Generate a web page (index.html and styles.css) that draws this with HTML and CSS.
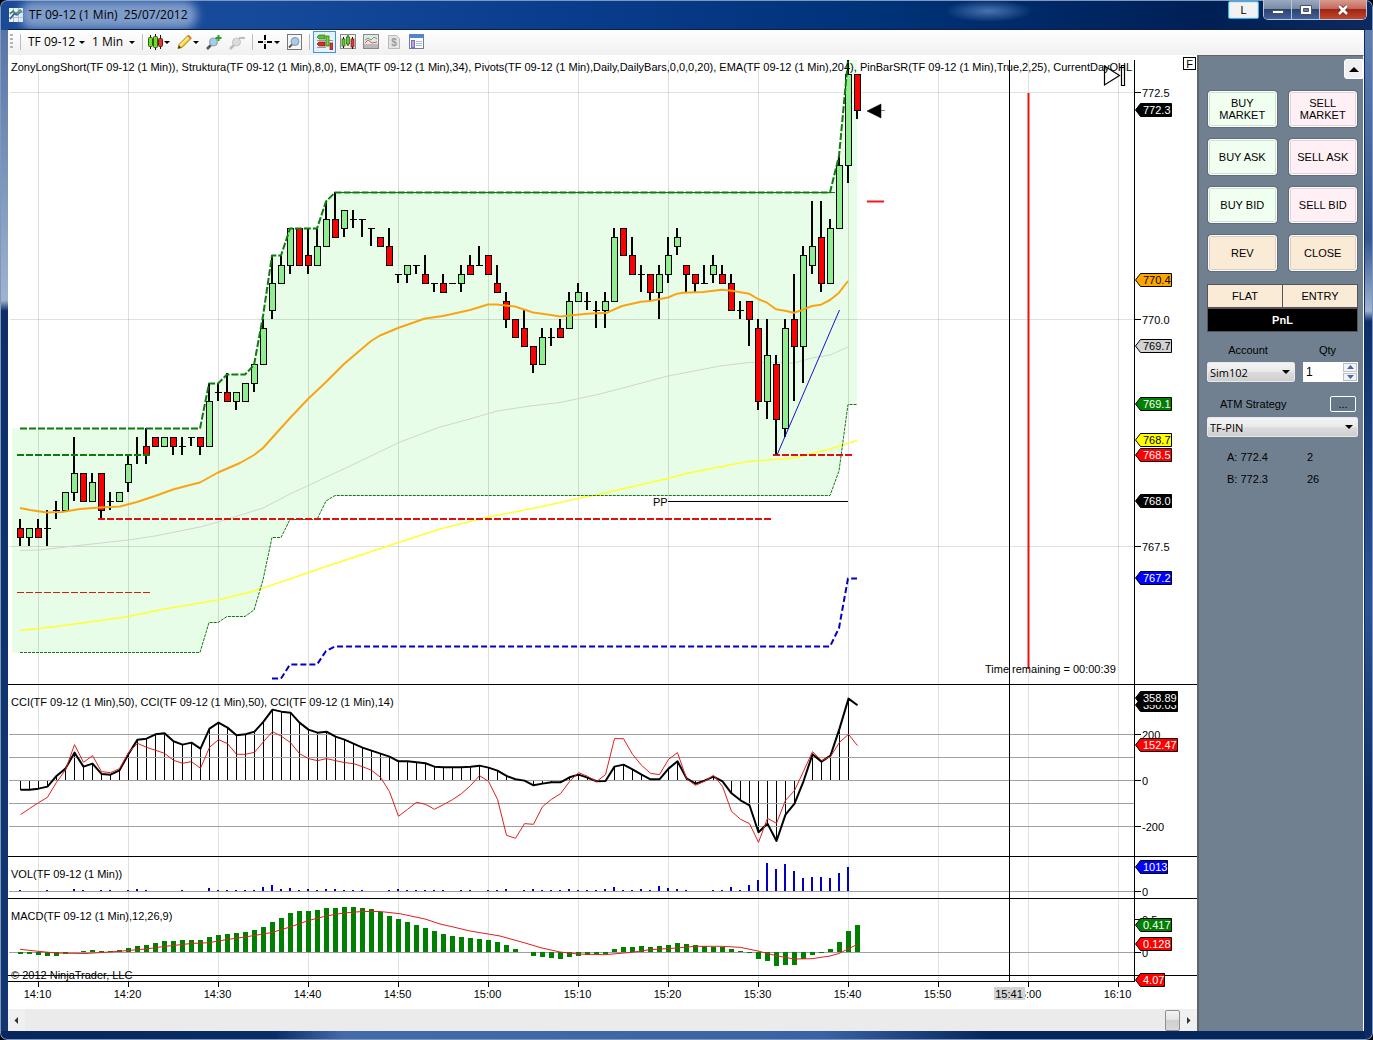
FILE: index.html
```html
<!DOCTYPE html>
<html lang="en">
<head>
<meta charset="utf-8">
<title>TF 09-12 (1 Min)</title>
<link rel="stylesheet" href="styles.css">
</head>
<body>
<div class="window">
  <header class="titlebar">
    <svg class="app-icon" width="14" height="14" viewBox="0 0 14 14"><rect width="14" height="14" fill="#eef3f6"/><path d="M4.500 0v14M9.500 0v14M0 4.500h14M0 9.500h14" stroke="#a9bccb"/><path d="M1 6l3-3 3 3 4-4 2 2" fill="none" stroke="#2f8a3a" stroke-width="1.500"/><path d="M1 11l4-5 3 1 5-4" fill="none" stroke="#2b56a8" stroke-width="1.500"/></svg>
    <h1 class="title">TF 09-12 (1 Min)&nbsp; 25/07/2012</h1>
    <button class="l-button" type="button">L</button>
    <div class="caption-buttons">
      <button class="cap" type="button" aria-label="Minimize"><svg width="14" height="12" viewBox="0 0 14 12"><rect x="1.500" y="6.500" width="11" height="3" fill="#fff" stroke="#4a5266"/></svg></button>
      <button class="cap" type="button" aria-label="Maximize"><svg width="14" height="12" viewBox="0 0 14 12"><path d="M1.500 1.500h11v9h-11z" fill="#fff" stroke="#4a5266"/><path d="M4.500 4.500h5v3h-5z" fill="#6b7fa5" stroke="#4a5266"/></svg></button>
      <button class="cap cap-close" type="button" aria-label="Close"><svg width="14" height="12" viewBox="0 0 14 12"><path d="M3 2l8 8M11 2l-8 8" stroke="#6b3030" stroke-width="4"/><path d="M3 2l8 8M11 2l-8 8" stroke="#fff" stroke-width="2.500"/></svg></button>
    </div>
  </header>

  <div class="client">
    <nav class="toolbar" aria-label="Chart toolbar">
      <span class="grip"></span>
      <span class="sep"></span>
      <button class="tool tool-instrument" type="button">TF 09-12<i class="caret"></i></button>
      <button class="tool tool-interval" type="button">1 Min<i class="caret"></i></button>
      <span class="sep"></span>
      <button class="tool tool-drop" type="button" aria-label="Chart style">
        <svg width="15" height="16" viewBox="0 0 15 16"><path d="M2.500 1v14M7.500 0v16M12.500 1v14" stroke="#111"/><rect x=".5" y="3.500" width="4" height="9" rx="1" fill="#6fdc2c" stroke="#2c5c12"/><rect x="5.500" y="2.500" width="4" height="11" rx="1" fill="#6fdc2c" stroke="#2c5c12"/><rect x="10.500" y="4.500" width="4" height="8" rx="1" fill="#e2382e" stroke="#6e1c16"/></svg><i class="caret"></i></button>
      <button class="tool tool-drop" type="button" aria-label="Draw">
        <svg width="15" height="16" viewBox="0 0 15 16"><path d="M1 14.500l1-4 9-9 3 3-9 9z" fill="#fbd12b" stroke="#a67c10"/><path d="M3 11.500l9-9" stroke="#fff3a8" stroke-width="1.500"/><path d="M1 14.500l1-3 2 2z" fill="#333"/><path d="M11 1.500l3 3" stroke="#d9773b" stroke-width="2"/></svg><i class="caret"></i></button>
      <button class="tool" type="button" aria-label="Zoom in">
        <svg width="16" height="16" viewBox="0 0 16 16"><path d="M1 15l4-4" stroke="#555" stroke-width="2.500"/><circle cx="7.500" cy="8" r="4" fill="#a7cbe8" stroke="#8b9bab"/><path d="M12.500 1v6M9.500 4h6" stroke="#2c9d2c" stroke-width="2"/></svg></button>
      <button class="tool" type="button" aria-label="Zoom out">
        <svg width="16" height="16" viewBox="0 0 16 16"><path d="M1 15l4-4" stroke="#bbb" stroke-width="2.500"/><circle cx="7.500" cy="8" r="4" fill="#dcdcdc" stroke="#c4c4c4"/><path d="M10 4h6" stroke="#bdbdbd" stroke-width="2"/></svg></button>
      <span class="sep"></span>
      <button class="tool tool-drop" type="button" aria-label="Crosshair">
        <svg width="15" height="16" viewBox="0 0 15 16"><path d="M7 1v5M7 10v5M0 8h5M9 8h5" stroke="#000" stroke-width="2"/><path d="M6.500 8h1" stroke="#000"/></svg><i class="caret"></i></button>
      <button class="tool" type="button" aria-label="Zoom frame">
        <svg width="15" height="16" viewBox="0 0 15 16"><rect x=".5" y=".5" width="14" height="15" fill="#f7f7f7" stroke="#777"/><path d="M2 13.500l3-3" stroke="#555" stroke-width="2"/><circle cx="8" cy="7.500" r="4" fill="#a7cbe8" stroke="#7d95ab"/></svg></button>
      <span class="sep"></span>
      <div class="tool-group">
        <button class="tool tool-sq tool-on" type="button" aria-label="Chart trader">
          <svg width="16" height="16" viewBox="0 0 16 16"><path d="M0 6.500h16M0 13.500h9" stroke="#999"/><path d="M2 1h6v4H2L0 3z" fill="#57c22c" stroke="#2c7a14" stroke-width=".7"/><path d="M2 8h6v4H2L0 10z" fill="#d92d22" stroke="#7a1410" stroke-width=".7"/><rect x="9" y="2" width="3" height="10" fill="#6fdc2c" stroke="#2c5c12" stroke-width=".7"/><rect x="13" y="9" width="3" height="7" fill="#e2382e" stroke="#6e1c16" stroke-width=".7"/></svg></button>
        <button class="tool tool-sq" type="button" aria-label="Data series">
          <svg width="16" height="16" viewBox="0 0 16 16"><rect x=".5" y=".5" width="15" height="14" fill="#f0f0f0" stroke="#888"/><path d="M3.500 3v11M8 1v11M12.500 3v12" stroke="#111"/><rect x="2" y="5" width="3" height="7" fill="#5ccc24" stroke="#2c5c12" stroke-width=".7"/><rect x="6.500" y="3" width="3" height="7" fill="#5ccc24" stroke="#2c5c12" stroke-width=".7"/><rect x="11" y="5" width="3" height="8" fill="#e2382e" stroke="#6e1c16" stroke-width=".7"/></svg></button>
        <button class="tool tool-sq" type="button" aria-label="Indicators">
          <svg width="16" height="16" viewBox="0 0 16 16"><rect x=".5" y=".5" width="15" height="14" fill="#e6e6e6" stroke="#888"/><rect x="1" y="10" width="14" height="4" fill="#b9b9b9"/><path d="M2 6l3-2 3 2 3-3 3 2" fill="none" stroke="#53b06a"/><path d="M2 9l3-3 4 3 5-1" fill="none" stroke="#d4605c"/></svg></button>
        <button class="tool tool-sq" type="button" aria-label="Strategies">
          <svg width="12" height="16" viewBox="0 0 12 16"><path d="M.5 1.500h8l3 3v10H.5z" fill="#e4e4e4" stroke="#b9b9b9"/><text class="dollar" x="6" y="12" text-anchor="middle">$</text></svg></button>
        <button class="tool tool-sq" type="button" aria-label="Properties">
          <svg width="15" height="16" viewBox="0 0 15 16"><rect x=".5" y=".5" width="14" height="14" fill="#fff" stroke="#6f7f98"/><rect x="1" y="1" width="13" height="3" fill="#4d86dd"/><rect x="2.500" y="6.500" width="3" height="7" fill="#b9a6f2" stroke="#7d68cc"/><path d="M7 7.500h6M7 9.500h6M7 11.500h6" stroke="#a9b8cc"/></svg></button>
      </div>
    </nav>

    <div class="workspace">
      <main class="chart">
        <div class="chart-body">
          <svg class="plot" id="plot" role="img" aria-label="Price chart"></svg>
          <svg class="axis" id="axis" role="img" aria-label="Price axis"></svg>
          <button class="f-button" type="button">F</button>
        </div>
        <div class="scrollbar">
          <button class="scroll-arrow" type="button" aria-label="Scroll left"><svg width="5" height="7" viewBox="0 0 5 7"><path d="M4 0v7L.5 3.500z" fill="#333"/></svg></button>
          <span class="scroll-thumb"></span>
          <button class="scroll-arrow" type="button" aria-label="Scroll right"><svg width="5" height="7" viewBox="0 0 5 7"><path d="M1 0v7l3.500-3.500z" fill="#333"/></svg></button>
        </div>
      </main>

      <aside class="trader">
        <button class="collapse" type="button" aria-label="Collapse"><svg width="10" height="5" viewBox="0 0 10 5"><path d="M0 5h10L5 0z" fill="#000"/></svg></button>
        <div class="orders">
          <button class="order buy" type="button">BUY<br>MARKET</button>
          <button class="order sell" type="button">SELL<br>MARKET</button>
          <button class="order buy" type="button">BUY ASK</button>
          <button class="order sell" type="button">SELL ASK</button>
          <button class="order buy" type="button">BUY BID</button>
          <button class="order sell" type="button">SELL BID</button>
          <button class="order manage" type="button">REV</button>
          <button class="order manage" type="button">CLOSE</button>
        </div>
        <div class="position">
          <span class="cell">FLAT</span><span class="cell">ENTRY</span>
          <span class="pnl">PnL</span>
        </div>
        <div class="account">
          <label for="account">Account</label>
          <label for="qty">Qty</label>
          <span class="select"><select id="account"><option>Sim102</option></select><i class="caret"></i></span>
          <span class="spinner">
            <input id="qty" type="text" value="1">
            <span class="spin-buttons">
              <button type="button" aria-label="Increase"><svg width="7" height="4" viewBox="0 0 7 4"><path d="M0 4h7L3.500 0z" fill="#4a66a8"/></svg></button>
              <button type="button" aria-label="Decrease"><svg width="7" height="4" viewBox="0 0 7 4"><path d="M0 0h7L3.500 4z" fill="#4a66a8"/></svg></button>
            </span>
          </span>
        </div>
        <div class="atm">
          <label for="atm">ATM Strategy</label>
          <button class="more" type="button">...</button>
        </div>
        <span class="select"><select id="atm"><option>TF-PIN</option></select><i class="caret"></i></span>
        <dl class="quotes">
          <dt>A: 772.4</dt><dd>2</dd>
          <dt>B: 772.3</dt><dd>26</dd>
        </dl>
      </aside>
    </div>
  </div>
</div>
<script src="chart.js"></script>
</body>
</html>
```
FILE: styles.css
```css
* { box-sizing: border-box; }

body {
  margin: 0;
  background: #000;
  font-family: "Liberation Sans", Arial, sans-serif;
  font-size: 11px;
  line-height: 12px;
  color: #000;
}

button, input, select {
  margin: 0;
  padding: 0;
  border: 0;
  font: inherit;
  color: inherit;
  background: none;
}

button {
  display: flex;
  align-items: center;
  justify-content: center;
}

.window {
  min-height: 100vh;
  display: flex;
  flex-direction: column;
  padding: 0 9px 9px 8px;
  border-radius: 7px;
  background:
    linear-gradient(#5f7fae, #33578f 20%, #9fb3d0 27%, #0c2f68 28%, #2c5494 55%, #0a2c62 75%) right 0 top 30px / 8px 100% no-repeat,
    linear-gradient(90deg, #06265b, #0a2d66 20%, #456aa8 25%, #3b62a2 60%, #05265a 72%) 0 100% / 100% 9px no-repeat,
    linear-gradient(#5575a6, #7f97bd 15%, #9fb3d0 26%, #0c2f68 27%, #123873) 0 30px / 8px 100% no-repeat,
    radial-gradient(ellipse 44px 11px at 72% 11px, rgba(120, 165, 220, .6), transparent) 0 0 / 100% 30px no-repeat,
    linear-gradient(90deg, #1b4a97, #164a9b 18%, #0a3d8e 40%, #003277 65%, #001f55 88%, #0c2a60) 0 0 / 100% 30px no-repeat,
    #0a2d66;
  box-shadow: inset 0 0 0 1px #7f97bd;
}

/* Title bar */
.titlebar {
  height: 29px;
  display: flex;
  align-items: flex-start;
}

.app-icon { margin: 8px 6px 0 1px; }

.title {
  margin: 10px auto 0 0;
  border-radius: 6px;
  background: rgba(195, 212, 236, .6);
  box-shadow: 0 0 10px 9px rgba(195, 212, 236, .6);
  font: 12px/10px "Open Sans", "Noto Sans", sans-serif;
}

.l-button {
  width: 31px;
  height: 18px;
  margin: 1px 4px 0 0;
  border: 1px solid #3fb0de;
  border-radius: 2px;
  background: #f2f2f2;
  box-shadow: inset 0 0 0 1px #c9ecf8;
}

.caption-buttons {
  display: flex;
  height: 20px;
  margin-right: -3px;
  border: 1px solid #b9c5da;
  border-top: 0;
  border-radius: 0 0 5px 5px;
  overflow: hidden;
}

.cap {
  width: 28px;
  border-right: 1px solid #b9c5da;
  background: linear-gradient(#9aa9c3, #76899f 48%, #2b4370 50%, #42629b);
}

.cap-close {
  width: 46px;
  border-right: 0;
  background: linear-gradient(#d99a8c, #c4685a 48%, #a02413 50%, #c2482e);
}

.client {
  flex: 1;
  display: flex;
  flex-direction: column;
  border-top: 1px solid #10203c;
  background: #fff;
}

/* Toolbar */
.toolbar {
  height: 25px;
  display: flex;
  align-items: center;
  gap: 7px;
  padding: 0 0 1px 2px;
  background: linear-gradient(#fff, #f0f0f0);
}

.grip { width: 3px; height: 16px; background: repeating-linear-gradient(#b5b5b5 0 2px, transparent 2px 4px); }
.sep { width: 1px; height: 16px; background: #bdbdbd; }

.tool {
  height: 22px;
  justify-content: space-between;
  font: 12px/16px "Open Sans", "Noto Sans", sans-serif;
  white-space: nowrap;
}

.tool-instrument { width: 57px; }
.tool-interval { width: 43px; }
.tool-drop { width: 22px; }
.sep + .tool-drop { margin-left: -2px; }
.tool-group { display: flex; margin-left: -4px; }
.tool-sq { width: 23px; justify-content: center; }
.tool-on { border: 1px solid #3c96e0; background: #e5f1fb; }
.dollar { font: bold 10px "Liberation Sans", sans-serif; fill: #999; }

.caret {
  flex: none;
  width: 0;
  height: 0;
  border: 3px solid transparent;
  border-top-color: #000;
  border-bottom: 0;
}

/* Chart */
.workspace { flex: 1; display: flex; }
.chart { flex: 1; min-width: 0; display: flex; flex-direction: column; }
.chart-body { flex: 1; display: flex; position: relative; }
.plot { flex: 1; min-width: 0; height: 954px; overflow: hidden; }
.axis { width: 63px; height: 954px; }
.plot text, .axis text { font: 11px "Liberation Sans", Arial, sans-serif; }

.f-button {
  position: absolute;
  right: 1px;
  top: 2px;
  width: 13px;
  height: 13px;
  border: 1px solid #000;
  background: #fff;
}

.scrollbar { height: 22px; display: flex; align-items: center; background: #ebebeb; }
.scroll-arrow { width: 17px; height: 22px; background: #f0f0f0; }
.scroll-thumb {
  width: 15px;
  height: 21px;
  margin-left: auto;
  border: 1px solid #8f8f8f;
  border-radius: 2px;
  background: linear-gradient(#f3f3f3, #e4e4e4 45%, #cfcfcf 50%, #d8d8d8);
}

/* Order entry panel */
.trader {
  width: 167px;
  padding: 4px 5px 0 8px;
  border: 1px solid #5f6468;
  border-width: 1px 0 0 2px;
  border-right: 1px solid #fff;
  background: #708090;
}

.collapse {
  width: 19px;
  height: 20px;
  margin: -1px -5px 12px auto;
  border: 1px solid #fff;
  border-radius: 3px 0 0 3px;
  background: #f0f0f0;
}

.orders {
  display: grid;
  grid-template-columns: 1fr 1fr;
  gap: 12px;
  padding: 0 1px;
}

.order {
  height: 36px;
  border: 1px solid #fff;
  border-radius: 3px;
  box-shadow: inset 0 0 0 1px rgba(0, 0, 0, .12), 0 0 0 1px #5f6d7b;
}

.buy { background: #f0fff0; }
.sell { background: #fff0f5; }
.manage { background: #faebd7; }

.position {
  display: grid;
  grid-template-columns: 1fr 1fr;
  gap: 1px;
  margin-top: 13px;
  border: 1px solid #555;
  background: #555;
  text-align: center;
  line-height: 22px;
}

.cell { background: #faebd7; }
.pnl { grid-column: 1 / -1; margin-top: 1px; background: #000; color: #fff; font-weight: bold; }

.account {
  display: grid;
  grid-template-columns: 88px 55px;
  justify-content: space-between;
  gap: 6px 0;
  margin-top: 12px;
}

.account label { text-align: center; padding-right: 6px; }

.select {
  display: flex;
  align-items: center;
  height: 20px;
  padding-right: 4px;
  border: 1px solid #e8e8e8;
  border-radius: 2px;
  background: linear-gradient(#f4f4f4, #e9e9e9 48%, #dcdcdc 52%, #cfcfcf);
}

.select select {
  flex: 1;
  appearance: none;
  padding-left: 2px;
  font: 11px/17px "Open Sans", "Noto Sans", sans-serif;
}

.select .caret { border-width: 4px 4px 0; }

.spinner { display: flex; height: 20px; padding: 1px; background: #fff; }
.spinner input { flex: 1; min-width: 0; padding-left: 2px; line-height: 16px; font-size: 12px; }
.spin-buttons { width: 14px; display: grid; grid-template-rows: 1fr 1fr; gap: 1px; }
.spin-buttons button { border: 1px solid #b9c0c9; background: #f2f2f2; }

.atm {
  display: flex;
  align-items: center;
  justify-content: space-between;
  margin: 14px 2px 5px 13px;
}

.more { width: 26px; height: 16px; border: 1px solid #fff; border-radius: 2px; background: #66778a; }

.quotes {
  display: grid;
  grid-template-columns: 80px 1fr;
  gap: 10px 0;
  margin: 14px 0 0 20px;
}

.quotes dd { margin: 0; }
```
FILE: chart.js
```js
const NS = "http://www.w3.org/2000/svg";
const TOP = 55, LEFT = 8, AXIS_LEFT = 1134;

// Bars are one minute apart, nine pixels each; the first bar is 14:08.
const barX = i => 20 + 9 * i;
// Candle prices are ticks of 0.1 from 770.0.
const tickY = t => 319.5 - 9.08 * t;

function add(parent, tag, attrs, text) {
  const node = document.createElementNS(NS, tag);
  for (const key in attrs) node.setAttribute(key, attrs[key]);
  if (text !== undefined) node.textContent = text;
  parent.appendChild(node);
  return node;
}
const rect = (g, x, y, w, h, fill, stroke) =>
  add(g, "rect", { x, y, width: w, height: h, fill, stroke: stroke || "none", "shape-rendering": "crispEdges" });
const seg = (g, x1, y1, x2, y2, stroke, width, dash) =>
  add(g, "line", { x1, y1, x2, y2, stroke, "stroke-width": width || 1, "stroke-dasharray": dash || "none" });
const poly = (g, points, stroke, width, dash) =>
  add(g, "polyline", { points: points.map(p => p.join()).join(" "), fill: "none", stroke, "stroke-width": width || 1, "stroke-dasharray": dash || "none", "stroke-linejoin": "round" });
const label = (g, x, y, text, fill, anchor) =>
  add(g, "text", { x, y: y + 4, fill: fill || "#000", "text-anchor": anchor || "start" }, text);

// open, high, low, close
const candles = [
  [-23,-22,-25,-24],[-24,-23,-25,-23],[-23,-22,-24,-24],[-23,-21,-25,-23],[-21,-20,-22,-21],[-21,-19,-21,-19],
  [-19,-13,-20,-17],[-17,-17,-20,-20],[-20,-17,-20,-18],[-17,-17,-22,-21],[-20,-19,-21,-20],[-20,-19,-20,-19],
  [-18,-15,-19,-16],[-15,-13,-16,-15],[-14,-12,-16,-15],[-13,-13,-14,-14],[-14,-13,-14,-13],[-13,-13,-15,-14],
  [-14,-13,-15,-14],[-13,-13,-14,-13],[-13,-13,-15,-14],[-14,-7,-14,-9],[-8,-7,-9,-8],[-8,-6,-9,-9],
  [-9,-8,-10,-8],[-9,-7,-9,-7],[-7,-5,-8,-5],[-5,0,-5,-1],[1,7,0,4],[4,7,4,6],[6,10,5,10],[10,10,6,6],
  [7,10,5,6],[6,10,6,8],[8,13,8,11],[11,14,9,9],[10,12,9,12],[11,12,10,11],[11,11,9,11],[10,10,8,10],
  [9,9,8,8],[8,10,6,6],[5,5,4,5],[5,6,4,6],[6,6,5,6],[5,7,4,4],[4,4,3,4],[4,5,3,3],[4,4,4,4],[4,6,3,5],
  [6,7,5,5],[6,8,6,6],[7,7,5,5],[4,6,3,3],[2,3,-1,0],[0,0,-2,-2],[-1,1,-3,-3],[-3,-3,-6,-5],[-5,-1,-5,-2],
  [-2,-1,-3,-2],[-1,0,-2,-2],[-1,3,-1,2],[2,4,2,3],[2,3,1,2],[1,2,-1,1],[1,3,-1,2],[2,10,2,9],[10,10,7,7],
  [7,9,5,5],[5,6,3,5],[5,5,2,3],[3,6,0,5],[5,9,4,7],[8,10,7,9],[6,6,3,5],[5,5,3,4],[4,6,4,4],[5,7,4,6],
  [5,6,4,4],[4,5,1,1],[1,2,0,1],[2,2,-3,0],[-1,0,-10,-9],[-9,0,-11,-4],[-5,-4,-15,-11],[-12,0,-13,-1],
  [0,5,-9,-3],[-3,8,-7,7],[6,13,5,8],[9,13,3,4],[4,11,4,10],[10,18,10,17],[17,28.5,15,27],[27,27,22,23]
];

const upper = [[20,428.5],[200,428.5],[209,383.5],[218,383.5],[227,374.5],[245,374.5],[254,365],[263,316],[272,255.5],[281,255.5],[290,228.5],[317,228.5],[326,201.5],[335,192.5],[830,192.5],[839,156],[848,60]];
const lower = [[20,652.5],[200,652.5],[209,622.5],[218,622.5],[227,616.5],[245,616.5],[254,610],[263,580],[272,537.5],[281,537.5],[290,519.5],[317,519.5],[326,501],[335,495.5],[830,495.5],[839,471],[848,404.5],[857,404.5]];
const ema34 = [[20,508],[30,510],[47,512.5],[62,512],[80,509],[100,507.5],[120,506.5],[137,502],[155,496],[173,489.5],[190,485],[200,482.5],[218,472.5],[240,463],[254,455],[263,448],[290,418],[308,399],[326,382],[344,364],[371,341],[380,335.5],[398,328],[425,318.5],[443,316],[461,312],[470,310],[488,304.5],[497,304.5],[515,306.5],[533,312.5],[551,315],[560,316.5],[587,313.7],[607,312.7],[622,306],[641,301.7],[650,301],[668,297.5],[677,293.7],[683,292.7],[703,292],[722,289.7],[732,290.7],[749,293.7],[758,299],[767,302.7],[776,309.3],[785,310.7],[794,312.7],[803,309.7],[812,306],[821,304.7],[830,300],[839,292.7],[848,281]];
const emaSlow = [[20,550.5],[40,550],[74,546],[128,540],[155,536],[200,527],[218,522],[263,508],[290,494],[320,480],[350,466],[400,442],[440,427],[468,419.5],[497,411],[530,406],[560,402.5],[600,394],[668,376],[720,366],[749,362.5],[794,363],[812,358],[830,355],[848,347]];
const ema204 = [[20,630.5],[60,626],[128,616.5],[164,609],[218,600],[254,591],[290,579],[320,568.5],[400,542],[440,529],[488,517],[540,507],[578,498.5],[596,495],[668,478.5],[686,473.5],[740,463],[749,461.5],[794,458],[830,449],[857,440.5]];
const dayLow = [[272,678.5],[281,678.5],[290,664.5],[317,664.5],[326,651],[335,646.5],[830,646.5],[839,628],[848,578.5],[857,578.5]];

// Oscillator values are thirds of a pixel from the pane's zero line.
const cci50 = [-28,-28,-25,-19,13,35,83,41,50,19,17,30,79,122,125,138,141,117,107,113,95,155,173,158,135,138,146,176,212,206,203,173,152,143,146,131,122,110,98,89,80,71,57,57,54,51,41,39,39,39,41,44,38,29,13,3,-1,-15,-10,-6,-6,9,17,8,-3,-2,41,47,33,17,3,3,35,57,6,-10,-1,11,-3,-39,-60,-75,-156,-130,-182,-103,-70,-3,78,56,74,155,245,225];
const cci14 = [-103,-85,-67,-51,-6,31,107,54,74,26,23,35,83,111,99,90,81,60,51,56,36,99,122,110,78,78,84,116,146,132,113,80,65,59,65,59,53,50,41,30,9,-34,-108,-87,-66,-72,-87,-73,-58,-40,-16,14,-3,-57,-165,-174,-130,-132,-79,-57,-40,-4,23,12,-4,17,125,125,78,45,21,17,63,83,5,-15,-3,15,-18,-93,-117,-130,-186,-114,-129,-60,-31,27,86,59,71,114,138,104];
const volume = [1,0,0,1,0,0,2,1,0,1,1,0,1,2,1,0,0,0,1,0,0,3,1,1,1,1,1,4,6,2,3,1,2,1,2,2,1,1,1,0,0,1,2,1,1,1,1,1,0,1,1,0,1,1,2,0,1,2,1,1,1,2,1,1,1,2,4,1,1,2,1,5,3,2,1,0,0,1,1,4,1,6,11,28,22,27,20,13,14,14,13,18,24];
const macd = [-5,-7,-10,-11,-11,-5,0,3,6,3,3,6,12,18,21,27,33,33,36,36,36,45,51,54,57,60,66,75,90,102,117,123,123,126,132,132,135,135,132,129,120,108,99,90,81,72,63,54,48,45,42,39,36,30,21,9,0,-12,-15,-18,-21,-15,-12,-9,-6,-6,9,15,15,18,15,18,21,27,24,21,18,16,15,9,3,-2,-21,-27,-42,-39,-39,-22,-9,-2,9,30,63,81];
const signal = [[20,949.3],[38,951.3],[56,953],[85,953.5],[110,952],[146,949],[164,946.5],[191,943.5],[209,942.7],[227,939.5],[245,937],[272,932.5],[290,927],[308,920.7],[326,916],[344,913],[362,911.5],[380,911.5],[400,913.7],[425,919],[440,924],[452,926.7],[470,931],[500,936],[524,942.7],[542,948],[560,952],[578,954],[605,954.7],[632,952.3],[650,949.7],[677,948],[695,946.3],[722,946.3],[740,947.3],[758,951],[776,955.7],[794,959],[812,958.7],[830,956],[839,953.5],[848,949],[857,944.5]];

const plot = document.getElementById("plot");
const g = add(plot, "g", { transform: `translate(${-LEFT} ${-TOP})` });

// Price band and grid
add(g, "polygon", { points: [[12,428.5], ...upper, [857,60], ...[...lower].reverse(), [12,652.5]].map(p => p.join()).join(" "), fill: "#e8fde8" });
for (let x = 38.5; x < 1134; x += 90) seg(g, x, 60, x, 981, "rgba(0,0,0,.12)");
const grid = add(plot, "g", { transform: `translate(0 ${-TOP})` });
for (const y of [92.5, 319.5, 546.5]) seg(grid, 2, y, "100%", y, "rgba(0,0,0,.12)");

const price = add(plot, "g", { transform: `translate(${-LEFT} ${-TOP})` });
poly(price, emaSlow, "#d3d3d3");
poly(price, ema204, "#ffff30", 1.5);
candles.forEach(([o, h, l, c], i) => {
  const x = barX(i), yTop = Math.floor(tickY(Math.max(o, c))), yBottom = Math.floor(tickY(Math.min(o, c)));
  const yHigh = Math.floor(tickY(h)), yLow = Math.floor(tickY(l));
  if (yLow > yHigh) rect(price, x - 1, yHigh, 2, yLow - yHigh, "#000");
  if (o === c) rect(price, x - 3, yTop, 7, 1, "#000");
  else rect(price, x - 2.5, yTop + .5, 6, yBottom - yTop, c > o ? "#90ee90" : "#f00", "#000");
});
poly(price, upper, "#107a10", 2, "7 2");
seg(price, 335, 192.5, 835, 192.5, "#107a10");
poly(price, lower, "#107a10", 1, "3 1");
poly(price, ema34, "#f9a414", 2);
poly(price, dayLow, "#0000c8", 2, "6 3");
seg(price, 17, 455, 150, 455, "#107a10", 2, "7 2");
seg(price, 98, 519, 771, 519, "#e01010", 2, "7 2");
seg(price, 773, 455, 852, 455, "#e01010", 2, "7 2");
seg(price, 17, 592.5, 151, 592.5, "#d02010", 1, "7 2");
seg(price, 777, 455, 839.5, 310, "#1414d8");
seg(price, 668, 501.5, 848, 501.5, "#000");
label(price, 653, 502, "PP");
seg(price, 867, 201.5, 884, 201.5, "#f81818", 2);
add(price, "path", { d: "M867 111l14-7v14zM880 110.500h5", stroke: "#000", "stroke-width": ".5" });
seg(price, 1028.5, 93, 1028.5, 669, "#f01010", 2);

// CCI
cci50.forEach((v, i) => { if (i < 93) seg(price, barX(i) + .5, 780.5, barX(i) + .5, 780.5 - v / 3, "#000"); });
const levels = add(plot, "g", { transform: `translate(0 ${-TOP})` });
for (const y of [734.5, 757.5, 780.5, 803.5, 826.5, 891.5, 952.5]) seg(levels, 1, y, "100%", y, "#a0a0a0");
const studies = add(plot, "g", { transform: `translate(${-LEFT} ${-TOP})` });
poly(studies, cci50.map((v, i) => [barX(i) + .5, 780.3 - v / 3]), "#000", 2);
poly(studies, cci14.map((v, i) => [barX(i) + .5, 780.3 - v / 3]), "#e02020");

// Volume and MACD
volume.forEach((v, i) => { if (v) rect(studies, barX(i) - 1, 891 - v, 2, v, "#0000c8"); });
macd.forEach((v, i) => { const h = Math.round(Math.abs(v) / 3); if (h) rect(studies, barX(i) - 2, v > 0 ? 952 - h : 952, 5, h, "#008000"); });
poly(studies, signal, "#e02020");

// Pane borders and captions
const over = add(plot, "g", { transform: `translate(0 ${-TOP})` });
for (const y of [684.5, 856.5, 898.5, 975.5, 981.5]) seg(over, 0, y, "100%", y, "#000");
const text = add(plot, "g", { transform: `translate(${-LEFT} ${-TOP})` });
label(text, 11, 67, "ZonyLongShort(TF 09-12 (1 Min)), Struktura(TF 09-12 (1 Min),8,0), EMA(TF 09-12 (1 Min),34), Pivots(TF 09-12 (1 Min),Daily,DailyBars,0,0,0,20), EMA(TF 09-12 (1 Min),204), PinBarSR(TF 09-12 (1 Min),True,2,25), CurrentDayOHL");
label(text, 11, 702, "CCI(TF 09-12 (1 Min),50), CCI(TF 09-12 (1 Min),50), CCI(TF 09-12 (1 Min),14)");
label(text, 11, 874, "VOL(TF 09-12 (1 Min))");
label(text, 11, 916, "MACD(TF 09-12 (1 Min),12,26,9)");
label(text, 11, 975, "© 2012 NinjaTrader, LLC");
label(text, 985, 669, "Time remaining = 00:00:39");
add(text, "path", { d: "M1104.500 66v19l15-9.500zM1121.500 65.500h3v20h-3z", fill: "none", stroke: "#000", "stroke-width": "1.200" });
seg(text, 1009.5, 60, 1009.5, 981, "#000");
["14:10","14:20","14:30","14:40","14:50","15:00","15:10","15:20","15:30","15:40","15:50","16:00","16:10"].forEach((t, n) => {
  const x = 38.5 + 90 * n;
  seg(text, x, 981, x, 987, "#000");
  label(text, x - 1, 994, t, "#000", "middle");
});
rect(text, 994, 987, 31, 13, "#d3d3d3");
label(text, 1009, 994, "15:41", "#000", "middle");

// Right-hand axis
const a = add(document.getElementById("axis"), "g", { transform: `translate(${-AXIS_LEFT} ${-TOP})` });
seg(a, 1134.5, 60, 1134.5, 982, "#000");
[[93,"772.5"],[320,"770.0"],[547,"767.5"],[735,"200"],[781,"0"],[827,"-200"],[892,"0"],[920,"0.5"],[953,"0"]].forEach(([y, t]) => {
  seg(a, 1134, y - .5, 1141, y - .5, "#000");
  label(a, 1142, y, t);
});
for (const y of [684.5, 856.5, 898.5, 975.5]) seg(a, 1134, y, 1197, y, "#000");
[[110,"772.3","#000","#fff",1171],[280,"770.4","#ffa500","#000",1171],[346,"769.7","#d3d3d3","#000",1171],
 [404,"769.1","#008000","#fff",1171],[440,"768.7","#ff0","#000",1171],[455,"768.5","#f00","#fff",1171],
 [501,"768.0","#000","#fff",1171],[578,"767.2","#00f","#fff",1171],[705,"350.03","#000","#fff",1177],
 [698,"358.89","#000","#fff",1177],[745,"152.47","#f00","#fff",1177],[867,"1013","#00f","#fff",1167],
 [925,"0.417","#008000","#fff",1171],[944,"0.128","#f00","#fff",1171],[980,"4.07","#f00","#fff",1164]
].forEach(([y, t, fill, ink, right]) => {
  add(a, "path", { d: `M1135.500 ${y}L1140.500 ${y - 6.5}H${right + .5}V${y + 6.5}H1140.500z`, fill, stroke: "#000" });
  label(a, 1143, y, t, ink);
});
```
